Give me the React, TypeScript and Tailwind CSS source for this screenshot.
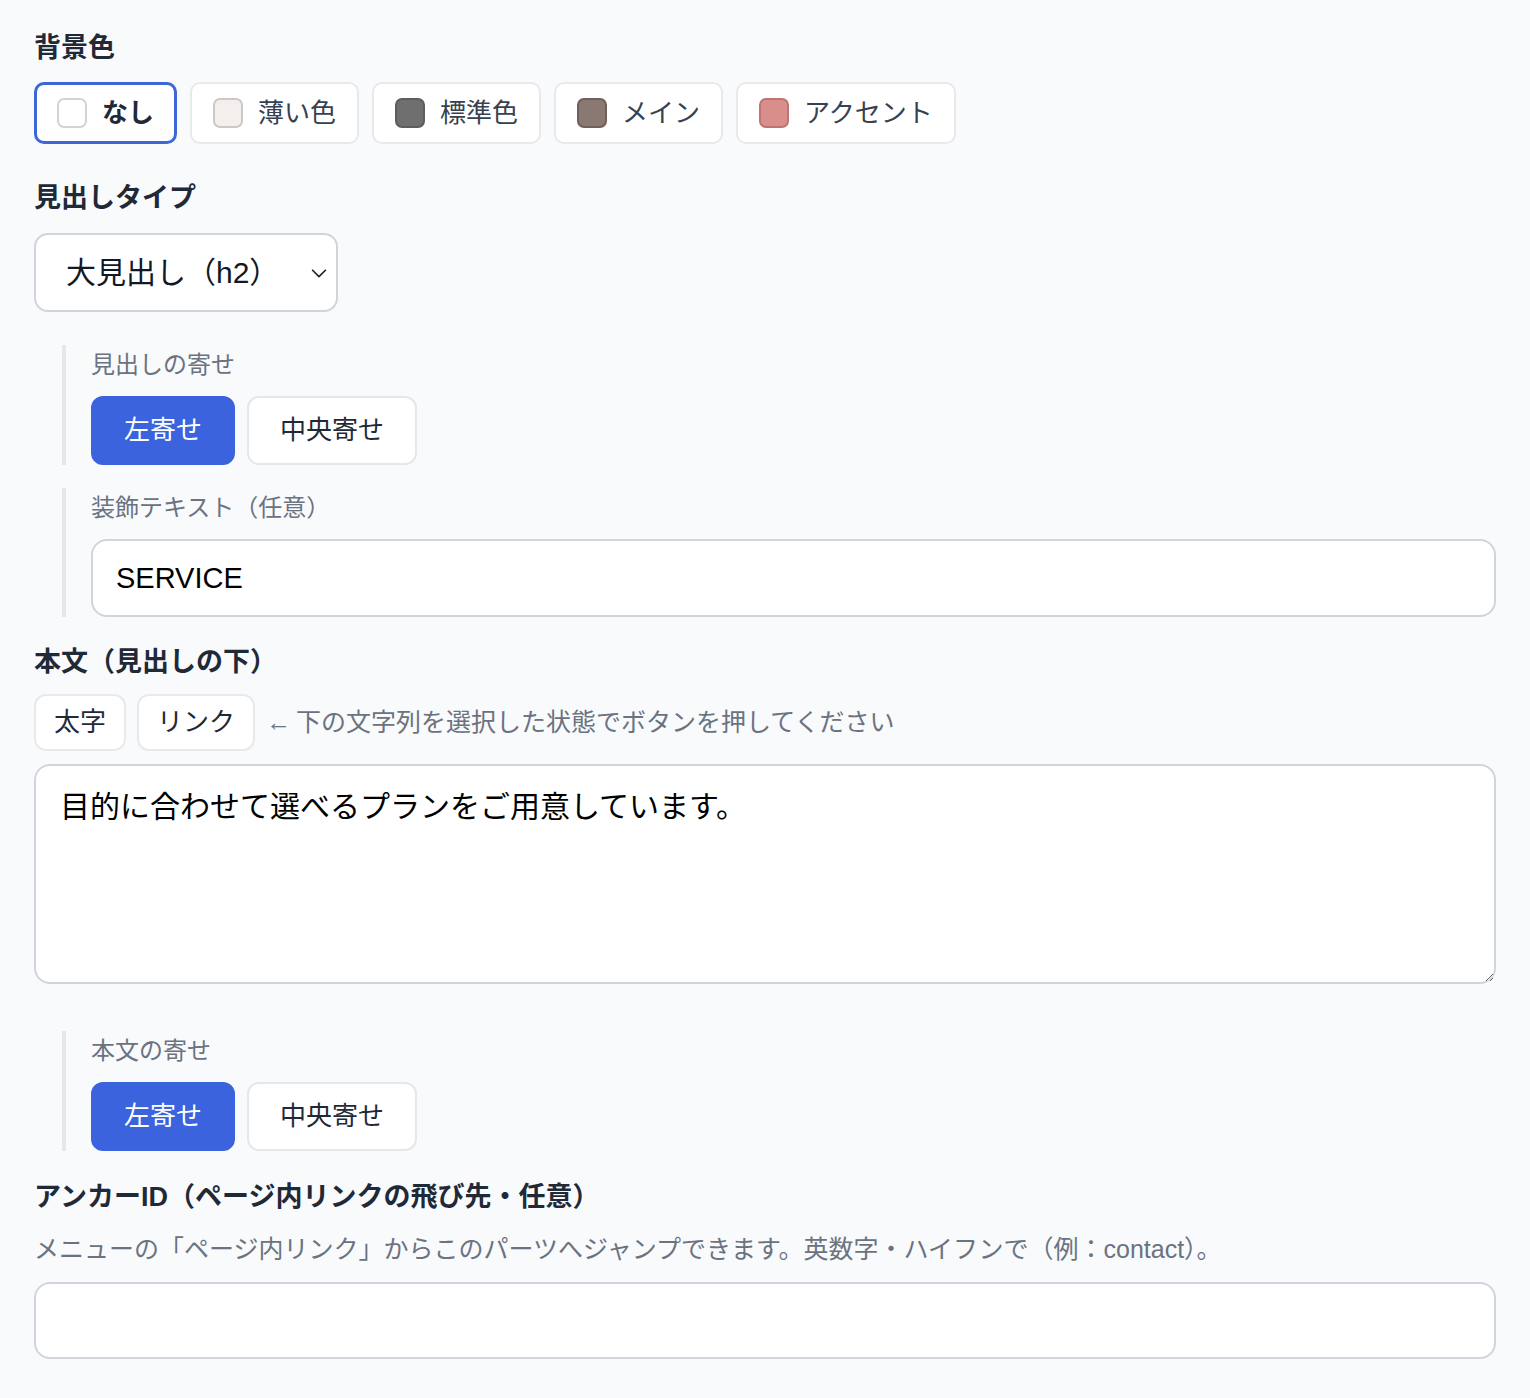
import React from "react";

const font = "font-['Liberation_Sans','Noto_Sans_CJK_JP',sans-serif]";

type Swatch = { label: string; fill: string; edge: string };

const swatches: Swatch[] = [
  { label: "なし", fill: "bg-white", edge: "border-[#d4d4d4]" },
  { label: "薄い色", fill: "bg-[#f3efec]", edge: "border-[#cdc8c4]" },
  { label: "標準色", fill: "bg-[#6f6f6f]", edge: "border-[#5d5d5d]" },
  { label: "メイン", fill: "bg-[#8a7872]", edge: "border-[#715f59]" },
  { label: "アクセント", fill: "bg-[#d88f8c]", edge: "border-[#c07371]" },
];

const Label = ({ children, className = "" }: { children: React.ReactNode; className?: string }) => (
  <div className={`text-[27px] font-bold leading-[36px] text-[#1f2937] ${className}`}>{children}</div>
);

// grey label inside the indented sub-sections
const SubLabel = ({ children }: { children: React.ReactNode }) => (
  <div className="text-[24px] leading-[40px] text-[#6b7280]">{children}</div>
);

const AlignButtons = () => (
  <div className="mt-[11px] flex gap-3">
    <button className="h-[69px] rounded-[12px] border-2 border-[#3b63dd] bg-[#3b63dd] px-[31px] text-[26px] text-white">
      左寄せ
    </button>
    <button className="h-[69px] rounded-[12px] border-2 border-[#e5e7eb] bg-white px-[31px] text-[26px] text-[#1f2937]">
      中央寄せ
    </button>
  </div>
);

const Indented = ({ children, className = "" }: { children: React.ReactNode; className?: string }) => (
  <div className={`ml-[28px] border-l-4 border-[#e5e7eb] pl-[25px] ${className}`}>{children}</div>
);

export default function App() {
  return (
    <div className={`min-h-screen bg-[#f8fafc] px-[34px] pt-[30px] pb-[38px] ${font}`}>
      {/* 背景色 */}
      <Label>背景色</Label>
      <div className="mt-4 flex gap-[13px]">
        {swatches.map((s, i) => {
          const active = i === 0;
          return (
            <button
              key={s.label}
              className={`flex h-[62px] items-center gap-[15px] rounded-[10px] bg-white text-[26px] ${
                active
                  ? "border-[3px] border-[#3d66d8] px-[20px] font-bold text-[#1f2937]"
                  : "border-2 border-[#e8e9ec] px-[21px] text-[#374151]"
              }`}
            >
              <span className={`h-[30px] w-[30px] rounded-[7px] border-2 ${s.fill} ${s.edge}`} />
              <span>{s.label}</span>
            </button>
          );
        })}
      </div>

      {/* 見出しタイプ */}
      <Label className="mt-[36px]">見出しタイプ</Label>
      <div className="mt-[17px] flex h-[79px] w-[304px] items-center justify-between rounded-[14px] border-2 border-[#d1d5db] bg-white pl-[30px] pr-[6px]">
        <span className="text-[30px] text-[#111827]">大見出し（h2）</span>
        <svg width="22" height="22" viewBox="0 0 24 24" fill="none" stroke="#222" strokeWidth="1.8" strokeLinecap="round" strokeLinejoin="round">
          <path d="m5 9 7 7 7-7" />
        </svg>
      </div>

      <Indented className="mt-[33px]">
        <SubLabel>見出しの寄せ</SubLabel>
        <AlignButtons />
      </Indented>

      <Indented className="mt-[23px]">
        <SubLabel>装飾テキスト（任意）</SubLabel>
        <input
          readOnly
          value="SERVICE"
          className="mt-[11px] block h-[78px] w-full rounded-[16px] border-2 border-[#d1d5db] bg-white px-[23px] text-[29px] text-black outline-none"
        />
      </Indented>

      {/* 本文 */}
      <Label className="mt-[27px]">本文（見出しの下）</Label>
      <div className="mt-[14px] flex items-center gap-[11px]">
        <button className="h-[57px] rounded-[12px] border-2 border-[#e8e9ec] bg-white px-[18px] text-[26px] text-[#1f2937]">
          太字
        </button>
        <button className="h-[57px] rounded-[12px] border-2 border-[#e8e9ec] bg-white px-[18px] text-[26px] text-[#1f2937]">
          リンク
        </button>
        <span className="text-[25px] text-[#6b7280]">←&thinsp;下の文字列を選択した状態でボタンを押してください</span>
      </div>
      <textarea
        readOnly
        defaultValue="目的に合わせて選べるプランをご用意しています。"
        className="mt-[13px] block h-[220px] w-full rounded-[16px] border-2 border-[#d1d5db] bg-white px-[24px] pt-[18px] text-[30px] leading-[45px] text-black outline-none"
      />

      <Indented className="mt-[47px]">
        <SubLabel>本文の寄せ</SubLabel>
        <AlignButtons />
      </Indented>

      {/* アンカーID */}
      <Label className="mt-[28px]">アンカーID（ページ内リンクの飛び先・任意）</Label>
      <div className="mt-[18px] text-[25px] leading-[32px] text-[#6b7280]">
        メニューの「ページ内リンク」からこのパーツへジャンプできます。英数字・ハイフンで（例：contact）。
      </div>
      <input
        readOnly
        className="mt-[17px] block h-[77px] w-full rounded-[16px] border-2 border-[#d1d5db] bg-white px-[23px] text-[30px] outline-none"
      />
    </div>
  );
}
